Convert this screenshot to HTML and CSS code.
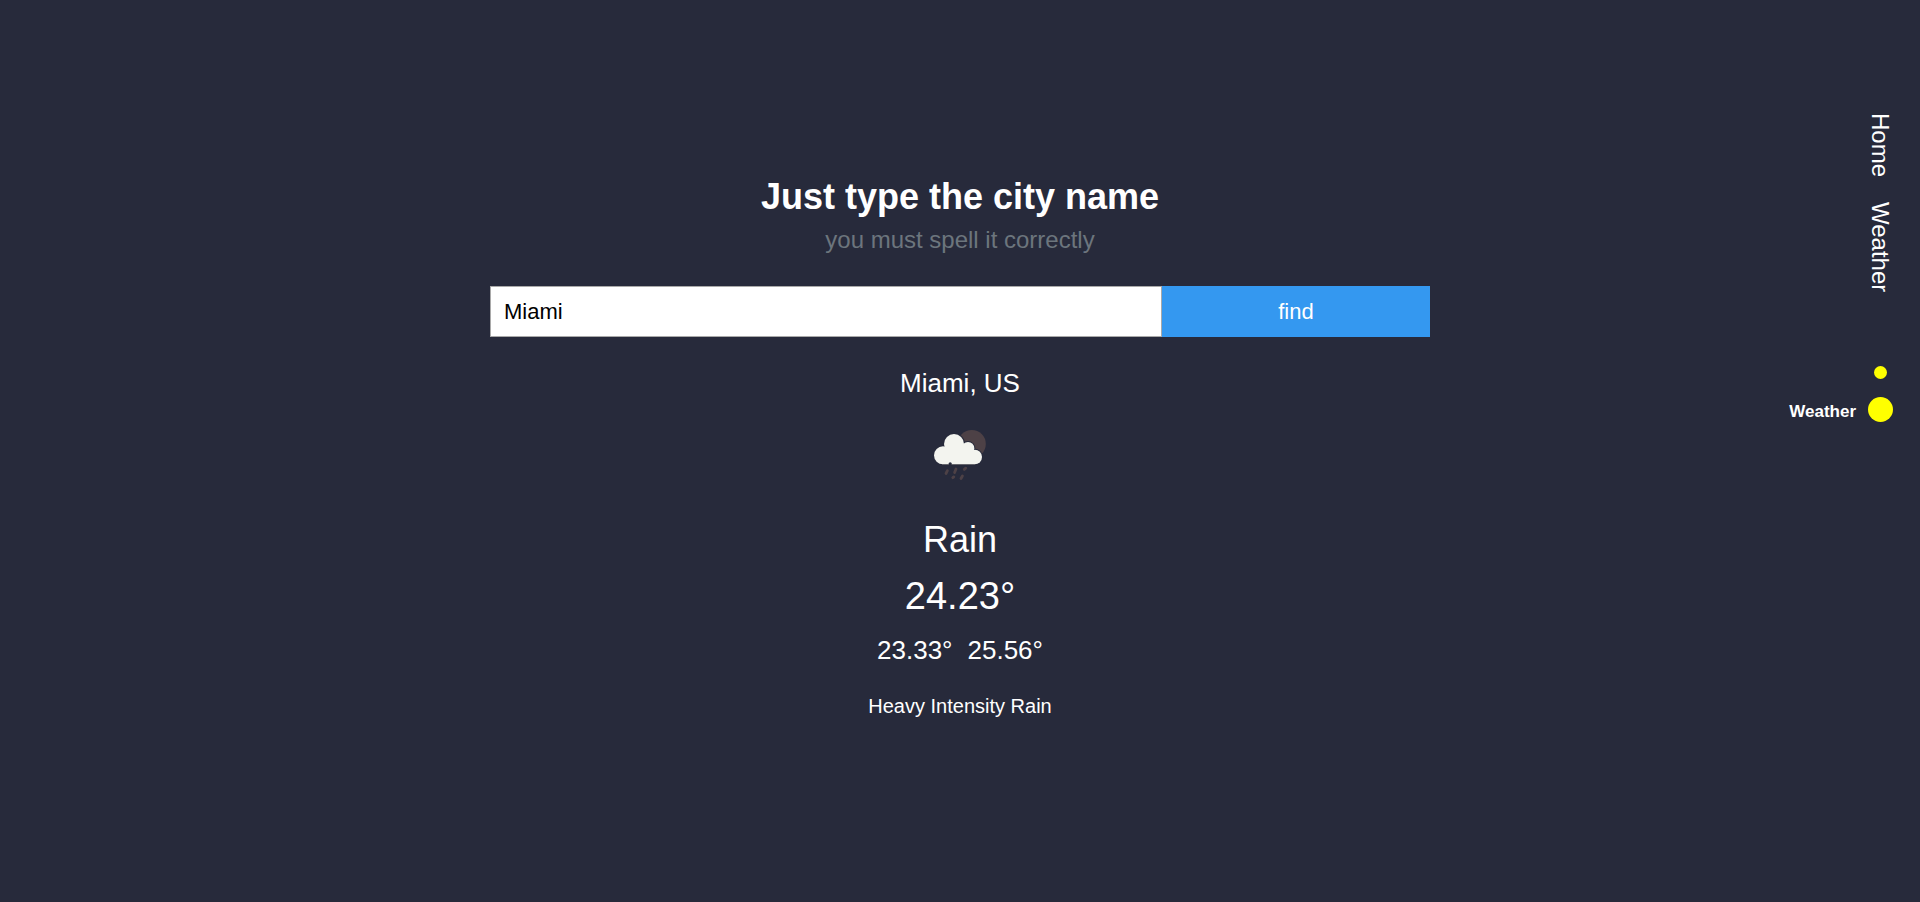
FILE: index.html
```html
<!DOCTYPE html>
<html lang="en">
<head>
<meta charset="utf-8">
<meta name="viewport" content="width=device-width, initial-scale=1">
<title>Weather</title>
<link rel="stylesheet" href="styles.css">
</head>
<body>
<div class="page">
  <main class="weather">
    <h1 class="title">Just type the city name</h1>
    <label class="hint" for="city">you must spell it correctly</label>
    <form class="search">
      <input class="search-input" id="city" type="text" value="Miami">
      <button class="search-button" type="button">find</button>
    </form>
    <section class="result">
      <p class="place">Miami, US</p>
      <svg class="icon" viewBox="0 0 100 100" role="img" aria-label="Rain">
        <circle cx="61.800" cy="39" r="14" fill="#4d4146"/>
        <g fill="#272a3b">
          <circle cx="44" cy="39" r="11"/>
          <circle cx="58" cy="43.300" r="7.300"/>
          <circle cx="64.700" cy="52" r="8.300"/>
        </g>
        <g fill="#f3f4ef">
          <circle cx="33" cy="50.300" r="9"/>
          <circle cx="44" cy="39" r="10"/>
          <circle cx="58" cy="43.300" r="6.300"/>
          <circle cx="64.700" cy="52" r="7.300"/>
          <path d="M33 59.300V46L38 40H58L64 48V59.300z"/>
        </g>
        <path d="M32 59.500H65" stroke="#65656c" stroke-width="1"/>
        <circle cx="40.200" cy="58.800" r="1.600" fill="#272a3b"/>
        <path d="M37.400 65.700l-1.400 2.800M46 64l-1.400 3.600M55.800 63.200l-1.500 1.200M43.800 71.900l-1 .800M52.400 71l-1.400 2.500" fill="none" stroke="#4d4146" stroke-width="2.800" stroke-linecap="round"/>
      </svg>
      <p class="condition">Rain</p>
      <p class="temperature">24.23°</p>
      <p class="range"><span>23.33°</span><span>25.56°</span></p>
      <p class="description">Heavy Intensity Rain</p>
    </section>
  </main>
  <aside class="side">
    <nav class="menu">
      <a href="#home">Home</a>
      <a href="#weather">Weather</a>
    </nav>
    <nav class="dots" aria-label="Pages">
      <a class="dot-link" href="#home" aria-label="Home"><span class="dot"></span></a>
      <a class="dot-link" href="#weather"><span class="dot-label">Weather</span><span class="dot dot-active"></span></a>
    </nav>
  </aside>
</div>
</body>
</html>
```
FILE: styles.css
```css
* {
  box-sizing: border-box;
}

body {
  margin: 0;
  background: #272a3b;
  color: #fff;
  font-family: "Liberation Sans", Arial, sans-serif;
}

h1,
p {
  margin: 0;
}

a {
  color: inherit;
  text-decoration: none;
}

.page {
  display: grid;
  grid-template-columns: 1fr minmax(0, 940px) 1fr;
  min-height: 100vh;
}

.weather {
  grid-column: 2;
  padding-top: 175px;
  text-align: center;
}

.title {
  font-size: 36px;
  line-height: 44px;
}

.hint {
  display: block;
  color: #6c757d;
  font-size: 24px;
  line-height: 42px;
}

.search {
  display: grid;
  grid-template-columns: 1fr 268px;
  margin-top: 25px;
}

.search-input,
.search-button {
  min-width: 0;
  padding: 12px 13px;
  border: 1px solid #a9a9a9;
  border-radius: 0;
  font: inherit;
  font-size: 22px;
  line-height: 25px;
}

.search-input {
  height: 51px;
  background: #fff;
  color: #000;
}

.search-button {
  border-color: #3498f0;
  background: #3498f0;
  color: #fff;
}

.result {
  display: flex;
  flex-direction: column;
  align-items: center;
  padding-top: 30px;
}

.place,
.range {
  font-size: 26px;
  line-height: 32px;
}

.icon {
  width: 100px;
  height: 100px;
  margin: 6px 0 13px;
}

.condition {
  font-size: 36px;
  line-height: 44px;
}

.temperature {
  margin-top: 12px;
  font-size: 38px;
  line-height: 44px;
}

.range {
  display: flex;
  gap: 15px;
  margin-top: 16px;
}

.description {
  margin-top: 26px;
  font-size: 20px;
  line-height: 28px;
}

.side {
  display: flex;
  flex-direction: column;
  align-items: flex-end;
  gap: 74px;
  padding: 113px 27px 0 0;
}

.menu {
  display: flex;
  gap: 25px;
  font-size: 24px;
  line-height: 25px;
  writing-mode: vertical-rl;
}

.dots {
  display: flex;
  flex-direction: column;
  align-items: flex-end;
  gap: 18px;
  font-size: 17px;
  font-weight: bold;
}

.dot-link {
  display: flex;
  align-items: center;
  gap: 12px;
}

.dot-label {
  padding-top: 4px;
}

.dot {
  width: 13px;
  height: 13px;
  margin: 0 6px;
  border-radius: 50%;
  background: #ff0;
}

.dot-active {
  width: 25px;
  height: 25px;
  margin: 0;
}
```
